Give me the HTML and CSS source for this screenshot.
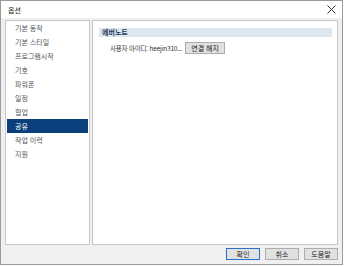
FILE: index.html
```html
<!DOCTYPE html>
<html lang="ko">
<head>
  <meta charset="UTF-8" />
  <title>옵션</title>
  <link rel="stylesheet" href="styles.css">
</head>
<body>
  <div class="dialog">
    <div class="titlebar">
      <span class="title">옵션</span>
      <svg class="close" width="9" height="9" viewBox="0 0 9 9"><path d="M0.5 0.5 L8.5 8.5 M8.5 0.5 L0.5 8.5" stroke="#333" stroke-width="1"/></svg>
    </div>
    <div class="content">
      <div class="panes">
        <ul class="menu">
          <li>기본 동작</li>
          <li>기본 스타일</li>
          <li>프로그램시작</li>
          <li>기호</li>
          <li>파워폰</li>
          <li>일정</li>
          <li>협업</li>
          <li class="active">공유</li>
          <li>작업 이력</li>
          <li>지원</li>
        </ul>
        <div class="page">
          <div class="section">에버노트</div>
          <div class="row">
            <span class="label">사용자 아이디: heejin310...</span>
            <button class="btn small">연결 해지</button>
          </div>
        </div>
      </div>
      <div class="footer">
        <button class="btn focus">확인</button>
        <button class="btn">취소</button>
        <button class="btn">도움말</button>
      </div>
    </div>
  </div>
</body>
</html>
```
FILE: styles.css
```css
html, body {
  margin: 0;
  padding: 0;
  background: #ffffff;
}
body {
  font-family: "Noto Sans CJK KR", "Noto Sans", sans-serif;
  font-size: 7px;
  color: #333;
}
.dialog {
  width: 341px;
  height: 263px;
  border: 1px solid #9a9a9a;
  display: flex;
  flex-direction: column;
  background: #f0f0f0;
}
.titlebar {
  height: 17px;
  background: #fff;
  display: flex;
  align-items: center;
  justify-content: space-between;
  padding: 0 6px 0 7px;
}
.title {
  font-size: 7px;
  color: #222;
}
.close {
  display: block;
}
.content {
  flex: 1;
  display: flex;
  flex-direction: column;
  padding: 2px 4px 0 4px;
}
.panes {
  display: flex;
  gap: 2px;
  height: 225px;
}
.menu {
  list-style: none;
  margin: 0;
  padding: 0 1px;
  width: 81px;
  background: #fff;
  border: 1px solid #c8c8c8;
  box-sizing: content-box;
}
.menu li {
  height: 14px;
  line-height: 14px;
  padding-left: 8px;
  color: #555;
}
.menu li.active {
  background: #0b3f7c;
  color: #fff;
}
.page {
  flex: 1;
  background: #fff;
  border: 1px solid #c8c8c8;
  padding: 7px 5px 0 6px;
}
.section {
  background: #dde7ef;
  color: #1f3a5a;
  font-weight: bold;
  height: 9px;
  line-height: 9px;
  padding-left: 3px;
}
.row {
  display: flex;
  align-items: center;
  gap: 3px;
  margin-top: 5px;
  padding-left: 11px;
}
.label {
  color: #333;
  font-size: 6.5px;
  letter-spacing: -0.2px;
}
.btn {
  font-family: inherit;
  font-size: 7px;
  color: #222;
  background: #e1e1e1;
  border: 1px solid #adadad;
  height: 12px;
  padding: 0;
  line-height: 10px;
  width: 34px;
  margin: 0;
}
.btn.small {
  width: 40px;
}
.btn.focus {
  border-color: #2a72c8;
}
.footer {
  display: flex;
  justify-content: flex-end;
  gap: 5px;
  padding: 3px 0 0 0;
}
```
